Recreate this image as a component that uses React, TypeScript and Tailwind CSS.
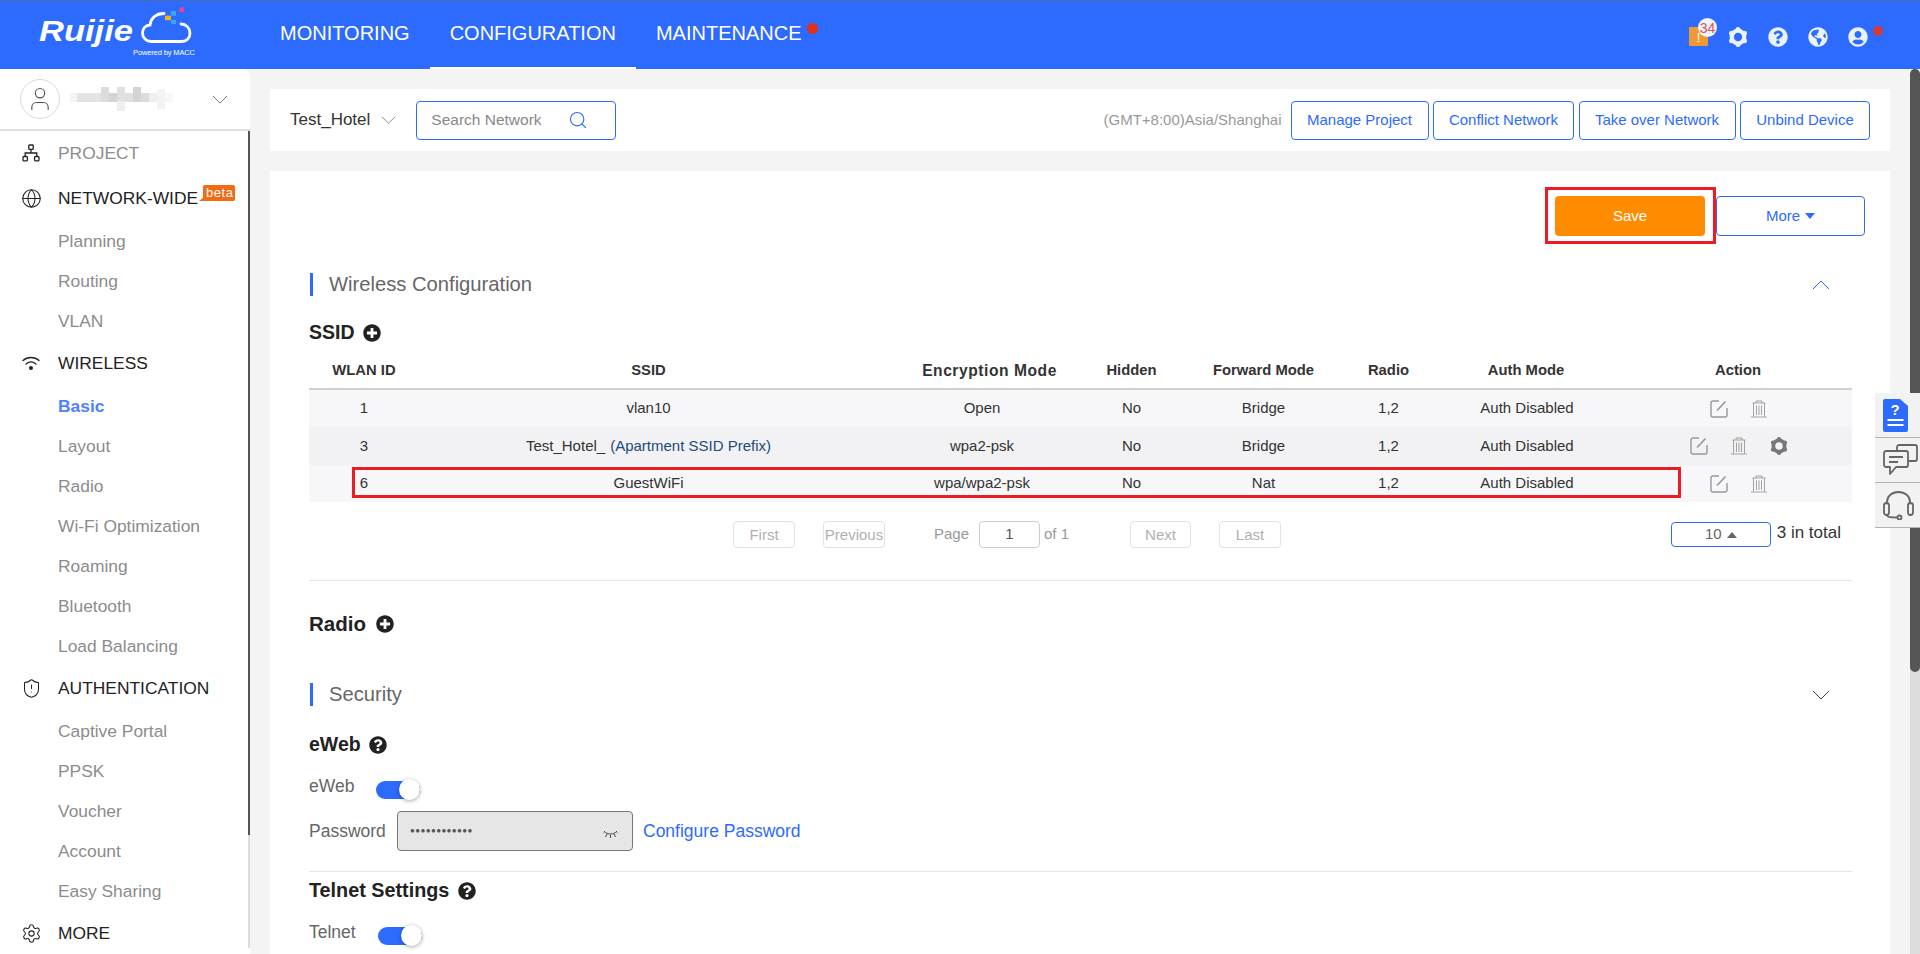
import { Globe, Search, Settings, ShieldAlert, User } from "lucide-react";
import { FaGlobeAmericas, FaPlusCircle, FaQuestionCircle, FaUserCircle } from "react-icons/fa";

function Logo() {
  return (
    <svg className="w-[156px] h-[50px] shrink-0 overflow-visible" viewBox="0 0 156 50">
      <text x="-1" y="31" fill="#fff" fontFamily="Liberation Sans" fontSize="30" fontWeight="700" fontStyle="italic" textLength="94" lengthAdjust="spacingAndGlyphs">
        Ruijie
      </text>
      <path
        d="M124 3.5C116 3.5 111 8 110 15C106 15 102.5 18 102.5 23C102.5 27.5 106 31.5 112 31.5H141C147 31.5 150 27.5 150 23C150 18 146 14 141 14"
        fill="none"
        stroke="#fff"
        strokeWidth="2.8"
        strokeLinecap="round"
      />
      <rect x="125" y="5.7" width="6" height="4.5" fill="#f5b21a" />
      <rect x="131" y="1" width="5" height="4.7" fill="#3aa8f0" />
      <rect x="131" y="10" width="5" height="4" fill="#3aa8f0" />
      <rect x="139.3" y="-2.7" width="4.5" height="4.7" fill="#ee3f9a" />
      <text x="93" y="45" fill="#fff" fontFamily="Liberation Sans" fontSize="7.5" textLength="62">
        Powered by MACC
      </text>
    </svg>
  );
}

function Chevron({ className }: { className: string }) {
  return (
    <svg className={className} viewBox="0 0 18 10" fill="none" stroke="currentColor" strokeWidth="1" preserveAspectRatio="none">
      <path d="M1 1L9 9L17 1" />
    </svg>
  );
}

function Gear({ className }: { className: string }) {
  return (
    <svg className={className} viewBox="0 0 24 24" fill="currentColor">
      <circle cx="12" cy="12" r="7.5" fill="none" stroke="currentColor" strokeWidth="5" />
      <circle cx="12" cy="3" r="3" />
      <circle cx="12" cy="21" r="3" />
      <circle cx="4.2" cy="7.5" r="3" />
      <circle cx="19.8" cy="7.5" r="3" />
      <circle cx="4.2" cy="16.5" r="3" />
      <circle cx="19.8" cy="16.5" r="3" />
    </svg>
  );
}

function ProjectIcon() {
  return (
    <svg className="w-[18px] h-[18px]" viewBox="0 0 18 18" fill="none" stroke="#222" strokeWidth="1.3">
      <rect x="6.8" y="1" width="4.4" height="4.4" rx="0.6" />
      <rect x="1" y="12.5" width="4.4" height="4.4" rx="1" />
      <rect x="12.6" y="12.5" width="4.4" height="4.4" rx="1" />
      <path d="M9 5.5V9M3.2 12.5V9H14.8V12.5" />
    </svg>
  );
}

function WifiIcon() {
  return (
    <svg className="w-[18px] h-[18px]" viewBox="0 0 18 18" fill="none" stroke="#222" strokeWidth="1.3" strokeLinecap="round">
      <path d="M1 6.5C5.5 2.5 12.5 2.5 17 6.5" />
      <path d="M4 10C7 7.5 11 7.5 14 10" />
      <circle cx="9" cy="14" r="2" fill="#222" stroke="none" />
    </svg>
  );
}

function EditIcon() {
  return (
    <svg className="w-[18px] h-[18px]" viewBox="0 0 18 18" fill="none" stroke="#999" strokeWidth="1.4">
      <path d="M9 1H3A2 2 0 0 0 1 3V15A2 2 0 0 0 3 17H15A2 2 0 0 0 17 15V8" />
      <path d="M7 10.5L15.5 1.5" strokeWidth="1.7" />
    </svg>
  );
}

function TrashIcon() {
  return (
    <svg className="w-[18px] h-[18px]" viewBox="0 0 18 18" fill="none" stroke="#999" strokeWidth="0.9">
      <path d="M6 3V1H12V3M2.5 3H15.5M3.5 3V16.5M14.5 3V16.5M6.5 5.5V15M9 5.5V15M11.5 5.5V15M1 17H17" />
    </svg>
  );
}

function DocIcon() {
  return (
    <svg className="w-[25px] h-[33px]" viewBox="0 0 25 33">
      <path d="M2 0H17L25 7V31A2 2 0 0 1 23 33H2A2 2 0 0 1 0 31V2A2 2 0 0 1 2 0Z" fill="#2d6bff" />
      <text x="12" y="16" fill="#fff" fontFamily="Liberation Sans" fontSize="15" fontWeight="700" textAnchor="middle">
        ?
      </text>
      <path d="M4.5 21H20.5M4.5 26H20.5" stroke="#fff" strokeWidth="2" />
    </svg>
  );
}

function ChatIcon() {
  return (
    <svg className="w-[35px] h-[32px]" viewBox="0 0 35 32" fill="none" stroke="#666" strokeWidth="1.8" strokeLinejoin="round">
      <path d="M3 7H23A2 2 0 0 1 25 9V21A2 2 0 0 1 23 23H13L7 30V23H3A2 2 0 0 1 1 21V9A2 2 0 0 1 3 7Z" />
      <path d="M14 6V3A2 2 0 0 1 16 1H32A2 2 0 0 1 34 3V15A2 2 0 0 1 32 17H26" />
      <path d="M6 13H20M6 18H15" />
    </svg>
  );
}

function HeadsetIcon() {
  return (
    <svg className="w-[31px] h-[29px]" viewBox="0 0 31 29" fill="none" stroke="#666" strokeWidth="1.8">
      <path d="M4 13V11C4 5 9 1 15.5 1C22 1 27 5 27 11V13" />
      <rect x="1" y="12" width="5" height="12" rx="2.5" />
      <rect x="25" y="12" width="5" height="12" rx="2.5" />
      <path d="M4 24C4 26 6 26.5 14 26.5" />
      <circle cx="16.5" cy="26.5" r="2" />
    </svg>
  );
}

function ClosedEye() {
  return (
    <svg className="w-[15px] h-[9px]" viewBox="0 0 15 9" fill="none" stroke="#333" strokeWidth="0.9">
      <path d="M1 2C4 6 11 6 14 2M4 5L2.5 8M7.5 6V9M11 5L12.5 8M1 3.5L0 4.5M14 3.5L15 4.5" />
    </svg>
  );
}

function Toggle({ className }: { className: string }) {
  return (
    <div className={`flex items-center w-[44px] h-[21px] ${className}`}>
      <div className="flex justify-end items-center w-[44px] h-[18px] rounded-full bg-[#2d6bff]">
        <div className="w-[21px] h-[21px] rounded-full bg-white shadow-[0_1px_4px_rgba(0,0,0,0.35)]" />
      </div>
    </div>
  );
}

function SectionTitle({ title, open, className }: { title: string; open: boolean; className: string }) {
  return (
    <div className={`flex items-center h-[23px] ${className}`}>
      <div className="w-[3px] h-[23px] ml-px bg-[#2d6bff]" />
      <span className="ml-[16px] text-[20.2px] text-[#666]">{title}</span>
      {open ? (
        <Chevron className="w-[18px] h-[10px] ml-auto mr-[22px] rotate-180 text-[#2d6bff]" />
      ) : (
        <Chevron className="w-[18px] h-[10px] ml-auto mr-[22px] text-[#444]" />
      )}
    </div>
  );
}

function MenuHead({ icon, label, muted }: { icon: React.ReactNode; label: React.ReactNode; muted?: boolean }) {
  return (
    <div className={`flex items-center h-[45px] pb-px pl-[22px] text-[17.4px] ${muted ? "text-[#8c8c8c]" : "text-[#222]"}`}>
      <div className="w-[18px] flex justify-center">{icon}</div>
      <div className="ml-[18px]">{label}</div>
    </div>
  );
}

function MenuSub({ label, active }: { label: string; active?: boolean }) {
  return (
    <div className={`flex items-center h-10 pl-[58px] text-[17.4px] ${active ? "font-bold text-[#4f80ff]" : "text-[#8c8c8c]"}`}>
      {label}
    </div>
  );
}

function Sidebar() {
  return (
    <div className="relative w-[250px] shrink-0 bg-white rounded-tr-lg">
      <div className="flex items-center h-[62px] pl-5 border-b-2 border-[#dedede]">
        <div className="flex items-center justify-center w-10 h-10 rounded-full border border-[#d8d8d8]">
          <User className="w-[28px] h-[28px] text-[#555]" strokeWidth={1} />
        </div>
        <div className="flex items-start h-6 ml-[10px]">
          <div className="w-[7px] h-[9px] mt-[6px] bg-[#f4f4f4]" />
          <div className="w-[24px] h-[9px] mt-[6px] bg-[#e4e4e4]" />
          <div className="w-[8px] h-[15px] bg-[#dcdcdc]" />
          <div className="w-[8px] h-[9px] mt-[6px] bg-[#d4d4d4]" />
          <div className="w-[8px] h-[24px] mt-0 bg-[linear-gradient(#e0e0e0_60%,#eee_60%)]" />
          <div className="w-[8px] h-[9px] mt-[6px] bg-[#e0e0e0]" />
          <div className="w-[8px] h-[15px] bg-[#d4d4d4]" />
          <div className="w-[8px] h-[9px] mt-[6px] bg-[#dcdcdc]" />
          <div className="w-[8px] h-[9px] mt-[6px] bg-[#efefef]" />
          <div className="w-[8px] h-[20px] mt-[2px] bg-[#f3f3f3]" />
          <div className="w-[8px] h-[9px] mt-[6px] bg-[#f7f7f7]" />
        </div>
        <Chevron className="w-[16px] h-[9px] ml-auto mr-[22px] text-[#666]" />
      </div>
      <MenuHead muted icon={<ProjectIcon />} label="PROJECT" />
      <MenuHead
        icon={<Globe className="w-[21px] h-[21px] shrink-0" strokeWidth={1.2} />}
        label={
          <div className="flex items-start">
            <span>NETWORK-WIDE</span>
            <span className="relative mt-0 ml-[5px] pl-[3px] h-[16px] w-[32px] rounded-[2px] bg-[#f26b12] text-[13px] leading-[16px] tracking-[0.5px] text-white">
              beta
              <span className="absolute -left-[4px] bottom-0 w-0 h-0 border-l-[5px] border-l-transparent border-b-[4px] border-b-[#f26b12]" />
            </span>
          </div>
        }
      />
      <MenuSub label="Planning" />
      <MenuSub label="Routing" />
      <MenuSub label="VLAN" />
      <MenuHead icon={<WifiIcon />} label="WIRELESS" />
      <MenuSub label="Basic" active />
      <MenuSub label="Layout" />
      <MenuSub label="Radio" />
      <MenuSub label="Wi-Fi Optimization" />
      <MenuSub label="Roaming" />
      <MenuSub label="Bluetooth" />
      <MenuSub label="Load Balancing" />
      <MenuHead icon={<ShieldAlert className="w-[21px] h-[21px] shrink-0" strokeWidth={1.2} />} label="AUTHENTICATION" />
      <MenuSub label="Captive Portal" />
      <MenuSub label="PPSK" />
      <MenuSub label="Voucher" />
      <MenuSub label="Account" />
      <MenuSub label="Easy Sharing" />
      <MenuHead icon={<Settings className="w-[21px] h-[21px] shrink-0" strokeWidth={1.2} />} label="MORE" />
      {/* menu scrollbar */}
      <div className="absolute right-0 top-[62px] w-[2px] h-[817px] bg-[#dcdcdc]">
        <div className="w-[2px] h-[704px] bg-[#555]" />
      </div>
    </div>
  );
}

function Header() {
  return (
    <div className="flex items-center h-[69px] shrink-0 pl-10 bg-[#2d6bff] border-t border-[#4a6cb0] text-white">
      <Logo />
      <div className="flex ml-[64px] text-[20px]">
        <div className="flex items-center h-[68px] px-5 pb-[4px]">MONITORING</div>
        <div className="flex items-center h-[68px] px-5 pb-[2px] border-b-2 border-white">CONFIGURATION</div>
        <div className="relative flex items-center h-[68px] px-5 pb-[4px]">
          MAINTENANCE
          <span className="absolute right-[4px] top-[22px] w-[11px] h-[11px] rounded-full bg-[#e0301e]" />
        </div>
      </div>
      <div className="flex items-center ml-auto mr-[52px] pt-[3px] text-[#eaf1ff]">
        <div className="relative flex items-end justify-center w-[19px] h-[19px] rounded-[1px] bg-[#ee9a34] text-[13px] leading-[16px] text-white">
          !
          <span className="absolute -top-[9px] left-[9px] flex items-center justify-center w-[19px] h-[19px] rounded-full bg-[#f0f4ff] text-[14px] text-[#d9534f]">
            34
          </span>
        </div>
        <Gear className="w-[20px] h-[20px] ml-[20px]" />
        <FaQuestionCircle className="w-[20px] h-[20px] ml-[20px]" />
        <FaGlobeAmericas className="w-[20px] h-[20px] ml-[20px]" />
        <div className="relative ml-[20px]">
          <FaUserCircle className="w-[20px] h-[20px]" />
          <span className="absolute -right-[15px] -top-[1px] w-[10px] h-[10px] rounded-full bg-[#d03a3a]" />
        </div>
      </div>
    </div>
  );
}

function TopBar() {
  const btn = "flex items-center justify-center h-[39px] rounded-[4px] border border-[#2d6bff] text-[15px] text-[#2d6bff]";
  return (
    <div className="flex items-center h-[62px] pl-5 pr-5 bg-white">
      <span className="text-[17px] text-[#333]">Test_Hotel</span>
      <Chevron className="w-[15px] h-[8px] ml-[11px] text-[#777]" />
      <div className="flex items-center w-[200px] h-[39px] ml-[20px] pl-[14px] rounded-[4px] border border-[#2d6bff] text-[15.5px] text-[#888]">
        Search Network
        <Search className="w-[20px] h-[20px] ml-[26px] text-[#2d6bff]" strokeWidth={1.4} />
      </div>
      <span className="ml-auto mr-[9px] text-[15px] text-[#999]">(GMT+8:00)Asia/Shanghai</span>
      <div className="flex gap-[4.5px]">
        <div className={`${btn} w-[138px]`}>Manage Project</div>
        <div className={`${btn} w-[141px]`}>Conflict Network</div>
        <div className={`${btn} w-[157px]`}>Take over Network</div>
        <div className={`${btn} w-[130px]`}>Unbind Device</div>
      </div>
    </div>
  );
}

const gridCols = "grid grid-cols-[94px_491px_191px_93px_171px_79px_196px_228px] items-center text-center";

const rows = [
  { id: "1", ssid: "vlan10", enc: "Open", fwd: "Bridge", bg: "bg-[#f7f7f9]", h: "h-[37px]" },
  { id: "3", ssid: "Test_Hotel_", prefix: "(Apartment SSID Prefix)", enc: "wpa2-psk", fwd: "Bridge", bg: "bg-[#f2f2f4]", h: "h-[38px]", gear: true },
  { id: "6", ssid: "GuestWiFi", enc: "wpa/wpa2-psk", fwd: "Nat", bg: "bg-[#f7f7f9]", h: "h-[37px]", marked: true },
];

function SsidTable() {
  return (
    <div className="mt-[6px]">
      <div className={`${gridCols} h-[37px] border-b-2 border-[#d0d0d0] text-[14.8px] font-bold text-[#333]`}>
        <div className="pl-4">WLAN ID</div>
        <div>SSID</div>
        <div className="text-[15.6px] tracking-[0.55px]">Encryption Mode</div>
        <div>Hidden</div>
        <div>Forward Mode</div>
        <div>Radio</div>
        <div>Auth Mode</div>
        <div>Action</div>
      </div>
      {rows.map((r) => (
        <div key={r.id} className={`${gridCols} relative ${r.h} ${r.bg} text-[15px] text-[#333]`}>
          <div className="pl-4">{r.id}</div>
          <div>
            {r.ssid}
            {r.prefix && <span className="ml-[5px] text-[#1f4a7c]">{r.prefix}</span>}
          </div>
          <div className="pr-[15px]">{r.enc}</div>
          <div>No</div>
          <div>{r.fwd}</div>
          <div>1,2</div>
          <div className="pl-[2px]">Auth Disabled</div>
          <div className="flex items-center justify-center gap-[22px] pl-[2px]">
            <EditIcon />
            <TrashIcon />
            {r.gear && <Gear className="w-[18px] h-[18px] text-[#777]" />}
          </div>
          {r.marked && <div className="absolute left-[43px] top-[2px] w-[1329px] h-[31px] border-[3px] border-[#ed1c24]" />}
        </div>
      ))}
    </div>
  );
}

function Pagination() {
  const pageBtn = "flex items-center justify-center h-[27px] pt-px rounded-[4px] border border-[#e2e2e2] text-[#b0b0b0]";
  return (
    <div className="flex items-center h-[27px] mt-[19px] text-[15px]">
      <div className={`${pageBtn} w-[62px] ml-[424px]`}>First</div>
      <div className={`${pageBtn} w-[62px] ml-[28px]`}>Previous</div>
      <span className="w-[45px] ml-[49px] text-[#999]">Page</span>
      <div className="flex items-center justify-center w-[61px] h-[27px] rounded-[4px] border border-[#ccc] text-[#555]">1</div>
      <span className="w-[90px] pl-[4px] text-[#999]">of 1</span>
      <div className={`${pageBtn} w-[61px]`}>Next</div>
      <div className={`${pageBtn} w-[62px] ml-[28px]`}>Last</div>
      <div className="flex items-center justify-center w-[100px] h-[25px] ml-auto rounded-[4px] border border-[#2d6bff] text-[#666]">
        10
        <span className="ml-[5px] w-0 h-0 border-x-[5px] border-x-transparent border-b-[6px] border-b-[#666]" />
      </div>
      <span className="ml-[6px] mr-[11px] -mt-[3px] text-[17px] text-[#333]">3 in total</span>
    </div>
  );
}

function Card() {
  return (
    <div className="flex-1 mt-5 pl-[39px] pr-[38px] bg-white text-[#333]">
      <div className="flex justify-end gap-[11px] pt-[25px] -mr-[13px]">
        <div className="relative flex items-center justify-center w-[150px] h-10 rounded-[4px] bg-[#ff8c00] text-[15px] text-white">
          Save
          <div className="absolute -left-[10px] -top-[9px] w-[171px] h-[57px] border-[3px] border-[#ed1c24]" />
        </div>
        <div className="flex items-center justify-center w-[149px] h-10 rounded-[4px] border border-[#2d6bff] text-[15px] text-[#2d6bff]">
          More
          <span className="ml-[5px] w-0 h-0 border-x-[5px] border-x-transparent border-t-[6px] border-t-[#2d6bff]" />
        </div>
      </div>

      <SectionTitle title="Wireless Configuration" open className="mt-[37px]" />

      <div className="flex items-center h-7 mt-[23px] text-[19.5px] font-bold text-[#222]">
        SSID
        <FaPlusCircle className="w-[18px] h-[18px] ml-[8px]" />
      </div>

      <SsidTable />
      <Pagination />

      <div className="h-px mt-[32px] bg-[#e5e5e5]" />

      <div className="flex items-center h-7 mt-[29px] text-[20.5px] font-bold text-[#222]">
        Radio
        <FaPlusCircle className="w-[18px] h-[18px] ml-[10px]" />
      </div>

      <SectionTitle title="Security" open={false} className="mt-[45px]" />

      <div className="flex items-center h-6 mt-[27px] text-[19.5px] font-bold text-[#222]">
        eWeb
        <FaQuestionCircle className="w-[18px] h-[18px] ml-[8px]" />
      </div>

      <div className="flex items-start h-6 mt-[18px] text-[17.5px] leading-[22px] text-[#666]">
        <span className="w-[67px]">eWeb</span>
        <Toggle className="mt-[4px]" />
      </div>

      <div className="flex items-center h-10 mt-[12px] text-[17.5px] text-[#666]">
        <span className="w-[88px]">Password</span>
        <div className="flex items-center w-[236px] h-10 pl-[12px] pr-[14px] rounded-[4px] border border-[#777] bg-[#e6e6e6] text-[#555]">
          <span className="text-[8px] tracking-[0.4px]">●●●●●●●●●●●●</span>
          <span className="ml-auto mt-[4px]">
            <ClosedEye />
          </span>
        </div>
        <span className="ml-[10px] text-[#2d6bff]">Configure Password</span>
      </div>

      <div className="h-px mt-[20px] bg-[#e5e5e5]" />

      <div className="flex items-center h-6 mt-[7px] text-[19.8px] font-bold text-[#222]">
        Telnet Settings
        <FaQuestionCircle className="w-[18px] h-[18px] ml-[9px]" />
      </div>

      <div className="flex items-start h-6 mt-[18px] text-[17.5px] leading-[22px] text-[#666]">
        <span className="w-[69px]">Telnet</span>
        <Toggle className="mt-[4px]" />
      </div>
    </div>
  );
}

function HelpPanel() {
  return (
    <div className="absolute right-0 top-[393px] w-[45px] bg-[#f2f2f2]">
      <div className="flex items-center h-[45px] pl-2 pt-px border-b border-[#b5b5b5]">
        <DocIcon />
      </div>
      <div className="flex items-center h-[45px] pl-2 border-b border-[#b5b5b5]">
        <ChatIcon />
      </div>
      <div className="flex items-center h-[45px] pl-2 border-b border-[#b5b5b5]">
        <HeadsetIcon />
      </div>
    </div>
  );
}

export default function App() {
  return (
    <div className="relative flex flex-col w-[1920px] h-[954px] overflow-hidden bg-[#f4f4f4] [font-family:'Liberation_Sans',Arial,sans-serif]">
      <Header />
      <div className="flex flex-1 min-h-0">
        <Sidebar />
        <div className="flex flex-col flex-1 min-w-0 pt-5 px-5">
          <TopBar />
          <Card />
        </div>
        <div className="w-[10px] shrink-0 rounded-t-md bg-[#dcdcdc]">
          <div className="h-[603px] rounded-md bg-[#555]" />
        </div>
      </div>
      <HelpPanel />
    </div>
  );
}
